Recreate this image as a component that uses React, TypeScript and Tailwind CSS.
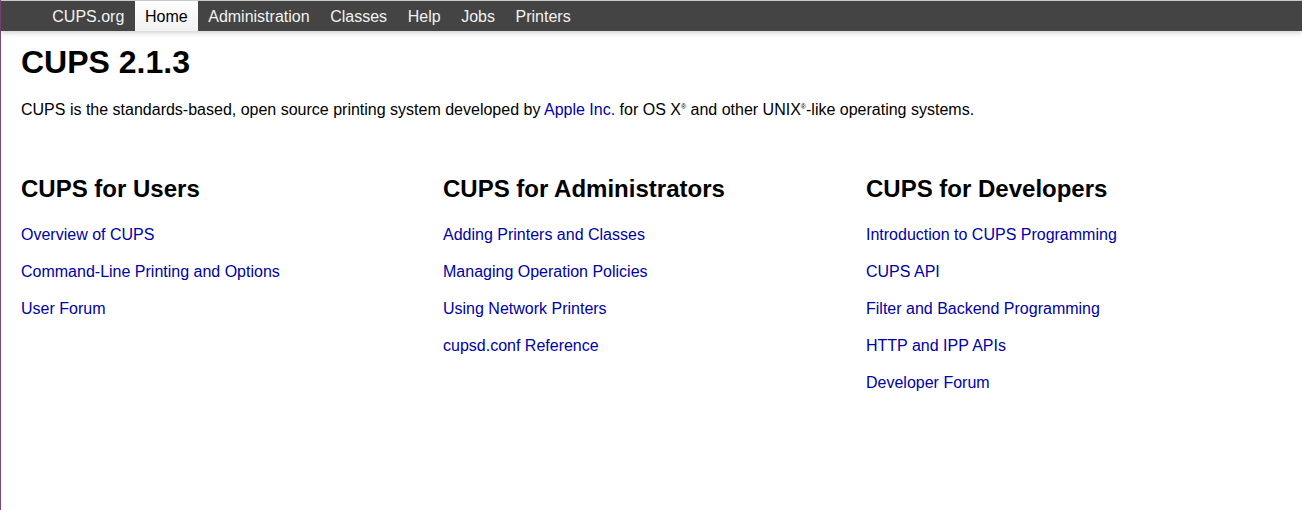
const navItems = ["CUPS.org", "Home", "Administration", "Classes", "Help", "Jobs", "Printers"];

const columns = [
  {
    title: "CUPS for Users",
    links: ["Overview of CUPS", "Command-Line Printing and Options", "User Forum"],
  },
  {
    title: "CUPS for Administrators",
    links: [
      "Adding Printers and Classes",
      "Managing Operation Policies",
      "Using Network Printers",
      "cupsd.conf Reference",
    ],
  },
  {
    title: "CUPS for Developers",
    links: [
      "Introduction to CUPS Programming",
      "CUPS API",
      "Filter and Backend Programming",
      "HTTP and IPP APIs",
      "Developer Forum",
    ],
  },
];

function Reg() {
  return <sup className="align-[3px] text-[7px] leading-none">®</sup>;
}

export default function App() {
  return (
    <div className="min-h-[510px] border-l border-[#7a487a] bg-white font-['Liberation_Sans',Arial,sans-serif] text-black">
      <div className="h-px bg-[#cfcfcf]" />
      <nav className="relative z-10 flex h-[30px] items-stretch bg-[#444444] pl-[41px] shadow-[0_2px_5px_rgba(0,0,0,0.18)]">
        {navItems.map((item) => (
          <a
            key={item}
            href="#"
            className={[
              "flex items-center px-[10.3px] pt-[2px] text-[16px] leading-[18px]",
              item === "Home"
                ? "bg-gradient-to-b from-white to-[#f1f1f1] text-black"
                : "text-[#f2f2f2]",
            ].join(" ")}
          >
            {item}
          </a>
        ))}
      </nav>

      <main className="pl-[20px] pr-[14px]">
        <h1 className="mt-[13px] text-[32px] font-bold leading-[37px]">CUPS 2.1.3</h1>
        <p className="mt-[20px] text-[16px] leading-[18px]">
          CUPS is the standards-based, open source printing system developed by{" "}
          <a href="#" className="text-[#0000a8]">
            Apple Inc.
          </a>{" "}
          for OS X<Reg /> and other UNIX<Reg />-like operating systems.
        </p>

        <div className="mt-[56px] grid grid-cols-[422px_423px_1fr]">
          {columns.map((col) => (
            <section key={col.title}>
              <h2 className="text-[24px] font-bold leading-[28px]">{col.title}</h2>
              <ul className="mt-[23px] flex flex-col gap-[19px]">
                {col.links.map((link) => (
                  <li key={link} className="text-[16px] leading-[18px]">
                    <a href="#" className="text-[#0000a8]">
                      {link}
                    </a>
                  </li>
                ))}
              </ul>
            </section>
          ))}
        </div>
      </main>
    </div>
  );
}
